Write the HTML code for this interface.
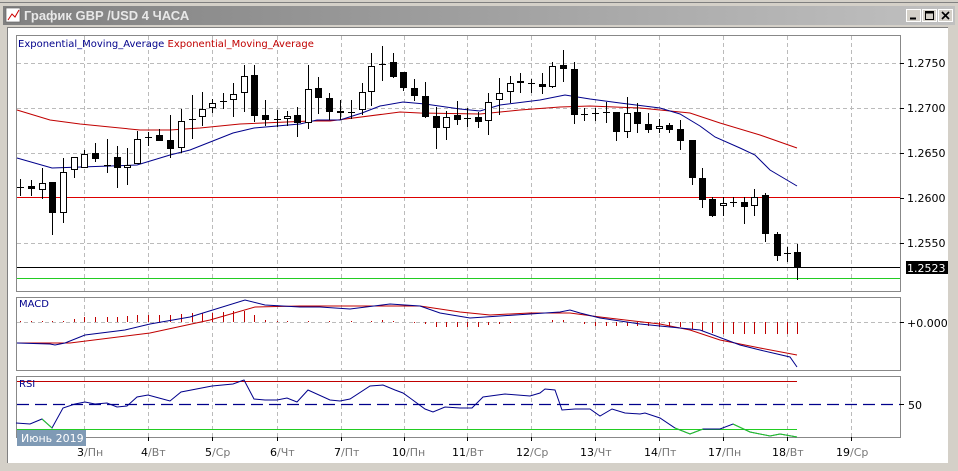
<!DOCTYPE html>
<html><head><meta charset="utf-8"><style>
body{margin:0;width:958px;height:471px;overflow:hidden;background:#d4d0c8;font-family:"DejaVu Sans",sans-serif}
svg{position:absolute;left:0;top:0}
</style></head><body>
<svg width="958" height="471" viewBox="0 0 958 471" font-family="'DejaVu Sans','Liberation Sans',sans-serif">
<defs><linearGradient id="tb" x1="0" x2="1"><stop offset="0" stop-color="#808080"/><stop offset="1" stop-color="#c0c0c0"/></linearGradient></defs>
<rect x="0" y="0" width="958" height="471" fill="#d4d0c8"/>
<line x1="0" y1="2.5" x2="958" y2="2.5" stroke="#808080"/>
<rect x="3" y="6" width="952" height="19" fill="url(#tb)"/>
<rect x="6" y="8" width="14" height="14" fill="#fff" stroke="#666" stroke-width="0.7"/>
<path d="M8 20L12 14L15 17L19 10" stroke="#c00" fill="none"/>
<text x="24" y="20" font-size="13" font-weight="bold" fill="#e8e8e8" font-family="'Liberation Sans',sans-serif">График GBP /USD  4 ЧАСА</text>
<g stroke="#000" fill="#d4d0c8">
<rect x="906.5" y="9.5" width="14" height="12" stroke="#fff"/><rect x="922.5" y="9.5" width="14" height="12" stroke="#fff"/><rect x="938.5" y="9.5" width="14" height="12" stroke="#fff"/>
</g>
<path d="M910 18.5h6" stroke="#000" stroke-width="2"/>
<rect x="925.5" y="11.5" width="8" height="8" fill="none" stroke="#000"/><line x1="925" y1="12.5" x2="934" y2="12.5" stroke="#000" stroke-width="2"/>
<path d="M942 12l7 7M949 12l-7 7" stroke="#000" stroke-width="1.6"/>
<rect x="7" y="27" width="941" height="436" fill="#fff"/>
<line x1="7.5" y1="27" x2="7.5" y2="463" stroke="#808080"/>
<line x1="7" y1="27.5" x2="948" y2="27.5" stroke="#808080"/>
<g fill="none" stroke="#888">
<rect x="16.5" y="35.5" width="884" height="256"/>
<rect x="16.5" y="297.5" width="884" height="73"/>
<rect x="16.5" y="376.5" width="884" height="61"/>
</g>
<g stroke="#bbb" stroke-dasharray="4,3">
<path d="M84.5 36V291M148.5 36V291M212.5 36V291M277.5 36V291M341.5 36V291M404.5 36V291M467.5 36V291M531.5 36V291M595.5 36V291M659.5 36V291M723.5 36V291M787.5 36V291M851.5 36V291"/>
<path d="M84.5 298V370M148.5 298V370M212.5 298V370M277.5 298V370M341.5 298V370M404.5 298V370M467.5 298V370M531.5 298V370M595.5 298V370M659.5 298V370M723.5 298V370M787.5 298V370M851.5 298V370"/>
<path d="M84.5 377V437M148.5 377V437M212.5 377V437M277.5 377V437M341.5 377V437M404.5 377V437M467.5 377V437M531.5 377V437M595.5 377V437M659.5 377V437M723.5 377V437M787.5 377V437M851.5 377V437"/>
<path d="M17 63.5H905M17 108.5H905M17 153.5H905M17 243.5H905M17 322.5H905"/>
</g>
<g stroke="#000"><path d="M84.5 437v4M148.5 437v4M212.5 437v4M277.5 437v4M341.5 437v4M404.5 437v4M467.5 437v4M531.5 437v4M595.5 437v4M659.5 437v4M723.5 437v4M787.5 437v4M851.5 437v4M900 63.5h4M900 108.5h4M900 153.5h4M900 198.5h4M900 243.5h4M900 322.5h4M900 404.5h4"/></g>
<line x1="17" y1="197.5" x2="900" y2="197.5" stroke="#dd0000"/>
<line x1="17" y1="267.5" x2="900" y2="267.5" stroke="#000"/>
<line x1="17" y1="278.5" x2="900" y2="278.5" stroke="#22cc22"/>
<polyline fill="none" stroke="#c00000" points="17,110 50,120 80,124 140,130 170,130 200,128 240,124 310,121 330,121 400,112 420,113 480,114 520,110 560,107 590,106 640,108 690,113 720,123 760,135 797,148"/>
<polyline fill="none" stroke="#00008b" points="17,158 52,168 137,165 170,155 190,150 233,133 254,128 300,124 317,120 340,120 362,113 380,106 403,102 425,104 460,109 480,111 500,105 540,100 565,95 590,99 620,103 660,108 680,114 700,126 715,137 740,148 755,155 770,170 797,186"/>
<path stroke="#000" fill="none" d="M20.5 179V196M31.5 180V196M42.5 168V199M52.5 182V235M63.5 158V223M74.5 157V178M84.5 150V167M95.5 143V162M107.5 139V173M117.5 146V188M127.5 148V185M137.5 131V163M148.5 132V146M159.5 129V141M170.5 115V158M181.5 109V153M192.5 95V139M202.5 92V126M212.5 99V113M223.5 93V109M233.5 83V117M244.5 65V112M254.5 65V122M265.5 100V126M277.5 110V127M287.5 111V126M297.5 107V137M308.5 65V129M318.5 77V114M329.5 93V120M340.5 100V120M351.5 100V119M362.5 83V115M371.5 53V106M382.5 46V81M393.5 53V78M403.5 72V91M414.5 79V101M425.5 82V118M436.5 107V149M446.5 111V140M457.5 101V125M467.5 108V127M478.5 112V128M488.5 93V135M499.5 78V115M510.5 76V103M520.5 73V93M531.5 79V93M542.5 73V94M552.5 62V88M563.5 50V82M574.5 62V124M584.5 108V121M595.5 108V121M606.5 102V123M616.5 112V141M627.5 97V138M637.5 103V133M648.5 113V133M659.5 119V133M669.5 123V133M680.5 120V150M692.5 140V185M702.5 168V208M712.5 197V217M723.5 197V216M733.5 197V207M744.5 197V224M754.5 189V216M765.5 193V242M777.5 232V261M787.5 247V262M797.5 244V280
M17 187.5h7M28 187.5h7M104 165.5h7M145 137.5h7M189 119.5h7M220 101.5h7M274 119.5h7M348 112.5h7M379 64.5h7M464 118.5h7M528 83.5h7M581 114.5h7M592 113.5h7M603 112.5h7M730 202.5h7M784 253.5h7"/>
<path fill="#000" d="M28 186h7v3h-7zM49 182h7v31h-7zM92 153h7v6h-7zM114 157h7v11h-7zM156 135h7v6h-7zM167 140h7v9h-7zM251 75h7v41h-7zM262 115h7v5h-7zM294 115h7v8h-7zM315 88h7v10h-7zM326 98h7v14h-7zM337 111h7v2h-7zM390 62h7v15h-7zM400 72h7v16h-7zM411 88h7v8h-7zM422 96h7v21h-7zM433 116h7v12h-7zM454 115h7v5h-7zM475 117h7v5h-7zM517 81h7v2h-7zM539 84h7v3h-7zM560 65h7v4h-7zM571 69h7v46h-7zM613 112h7v20h-7zM634 112h7v12h-7zM645 124h7v6h-7zM666 125h7v5h-7zM677 129h7v12h-7zM689 140h7v38h-7zM699 178h7v22h-7zM709 199h7v17h-7zM741 202h7v5h-7zM762 195h7v39h-7zM774 234h7v22h-7zM794 252h7v15h-7z"/>
<g fill="#fff" stroke="#000">
<rect x="39.5" y="183.5" width="6" height="6"/><rect x="60.5" y="172.5" width="6" height="40"/><rect x="71.5" y="157.5" width="6" height="12"/><rect x="81.5" y="154.5" width="6" height="13"/><rect x="124.5" y="165.5" width="6" height="2"/><rect x="134.5" y="139.5" width="6" height="24"/><rect x="178.5" y="121.5" width="6" height="26"/><rect x="199.5" y="109.5" width="6" height="7"/><rect x="209.5" y="103.5" width="6" height="4"/><rect x="230.5" y="94.5" width="6" height="5"/><rect x="241.5" y="76.5" width="6" height="16"/><rect x="284.5" y="116.5" width="6" height="2"/><rect x="305.5" y="89.5" width="6" height="33"/><rect x="359.5" y="92.5" width="6" height="17"/><rect x="368.5" y="66.5" width="6" height="25"/><rect x="443.5" y="117.5" width="6" height="10"/><rect x="485.5" y="102.5" width="6" height="18"/><rect x="496.5" y="93.5" width="6" height="6"/><rect x="507.5" y="83.5" width="6" height="8"/><rect x="549.5" y="66.5" width="6" height="20"/><rect x="624.5" y="113.5" width="6" height="18"/><rect x="656.5" y="126.5" width="6" height="2"/><rect x="720.5" y="203.5" width="6" height="2"/><rect x="751.5" y="197.5" width="6" height="8"/>
</g>
<text x="18" y="47" font-size="10" fill="#00008b">Exponential_Moving_Average <tspan fill="#c00000">Exponential_Moving_Average</tspan></text>
<g font-size="11" fill="#000">
<text x="907" y="67">1.2750</text><text x="907" y="112">1.2700</text><text x="907" y="157">1.2650</text><text x="907" y="202">1.2600</text><text x="907" y="247">1.2550</text>
<text x="907" y="327">+0.000</text><text x="908" y="409">50</text>
</g>
<rect x="906" y="261" width="42" height="13" fill="#000"/>
<text x="907" y="272" font-size="11" fill="#fff">1.2523</text>
<text x="19" y="307" font-size="10" fill="#00008b">MACD</text>
<path stroke="#c00000" fill="none" d="M20.5 322v-1M31.5 322v-1M42.5 322v-1M52.5 322v-1M63.5 322v-1M74.5 322v-3M84.5 322v-5M95.5 322v-5M107.5 322v-5M117.5 322v-5M127.5 322v-6M137.5 322v-7M148.5 322v-7M159.5 322v-7M170.5 322v-7M181.5 322v-8M192.5 322v-9M202.5 322v-9M212.5 322v-9M223.5 322v-10M233.5 322v-11M244.5 322v-11M254.5 322v-7M265.5 322v-2M277.5 322v-1M287.5 322v-1M308.5 322v-1M329.5 322v-1M351.5 322v-1M371.5 322v-1M382.5 322v-2M393.5 322v-1M414.5 322v1M425.5 322v2M436.5 322v5M446.5 322v5M457.5 322v5M467.5 322v5M478.5 322v5M488.5 322v3M499.5 322v2M510.5 322v1M552.5 322v-2M563.5 322v-2M584.5 322v2M595.5 322v4M606.5 322v4M616.5 322v4M627.5 322v4M637.5 322v4M648.5 322v4M659.5 322v5M669.5 322v5M680.5 322v5M692.5 322v7M702.5 322v9M712.5 322v11M723.5 322v12M733.5 322v12M744.5 322v12M754.5 322v12M765.5 322v12M777.5 322v12M787.5 322v12M797.5 322v12"/>
<polyline fill="none" stroke="#c00000" points="17,343 70,343 150,333 210,320 255,307 300,306 420,306 460,312 490,315 530,313 570,313 600,317 660,324 690,330 720,340 760,348 797,355"/>
<polyline fill="none" stroke="#00008b" points="17,343 50,344 55,345 65,343 85,335 125,330 150,324 190,317 245,300 265,305 300,307 320,307 350,309 390,304 420,306 440,313 470,318 500,316 530,314 560,312 570,310 580,313 600,318 640,324 680,328 700,330 740,345 760,350 790,357 797,367"/>
<line x1="17" y1="381.5" x2="797" y2="381.5" stroke="#c00000"/>
<line x1="17" y1="404.5" x2="900" y2="404.5" stroke="#00008b" stroke-dasharray="12,6" stroke-width="1.3"/>
<line x1="17" y1="429.5" x2="797" y2="429.5" stroke="#22cc22"/>
<text x="19" y="387" font-size="10" fill="#00008b">RSI</text>
<polyline fill="none" stroke="#00008b" points="16,423 30,424 42,419 52,428 63,408 75,404 85,402 95,404 107,403 117,407 127,406 137,397 148,395 159,398 170,401 181,392 212,386 233,384 244,380 254,399 265,400 277,400 287,398 297,402 308,390 330,400 340,401 350,399 370,386 383,385 395,390 403,393 410,398 425,409 433,412 445,407 460,408 472,408 483,397 505,394 530,396 540,393 545,389 555,390 562,410 575,409 590,409 600,416 612,409 625,413 640,414 645,413 660,418 675,428 690,434 703,429 720,429 733,424 750,432 770,436 780,434 797,437"/>
<polyline fill="none" stroke="#22cc22" points="675,428 690,434 703,429"/>
<polyline fill="none" stroke="#22cc22" points="733,424 750,432 770,436 780,434 797,437"/>
<polyline fill="none" stroke="#22cc22" points="42,419 52,428"/>
<rect x="17" y="430" width="69" height="16" fill="#7f9ab5"/>
<text x="21" y="442" font-size="11" fill="#fff">Июнь 2019</text>
<g font-size="11" fill="#777">
<text x="77" y="456"><tspan fill="#000">3</tspan>/Пн</text>
<text x="141" y="456"><tspan fill="#000">4</tspan>/Вт</text>
<text x="205" y="456"><tspan fill="#000">5</tspan>/Ср</text>
<text x="270" y="456"><tspan fill="#000">6</tspan>/Чт</text>
<text x="334" y="456"><tspan fill="#000">7</tspan>/Пт</text>
<text x="392" y="456"><tspan fill="#000">10</tspan>/Пн</text>
<text x="452" y="456"><tspan fill="#000">11</tspan>/Вт</text>
<text x="516" y="456"><tspan fill="#000">12</tspan>/Ср</text>
<text x="580" y="456"><tspan fill="#000">13</tspan>/Чт</text>
<text x="644" y="456"><tspan fill="#000">14</tspan>/Пт</text>
<text x="708" y="456"><tspan fill="#000">17</tspan>/Пн</text>
<text x="772" y="456"><tspan fill="#000">18</tspan>/Вт</text>
<text x="836" y="456"><tspan fill="#000">19</tspan>/Ср</text>
</g>
</svg>
</body></html>
